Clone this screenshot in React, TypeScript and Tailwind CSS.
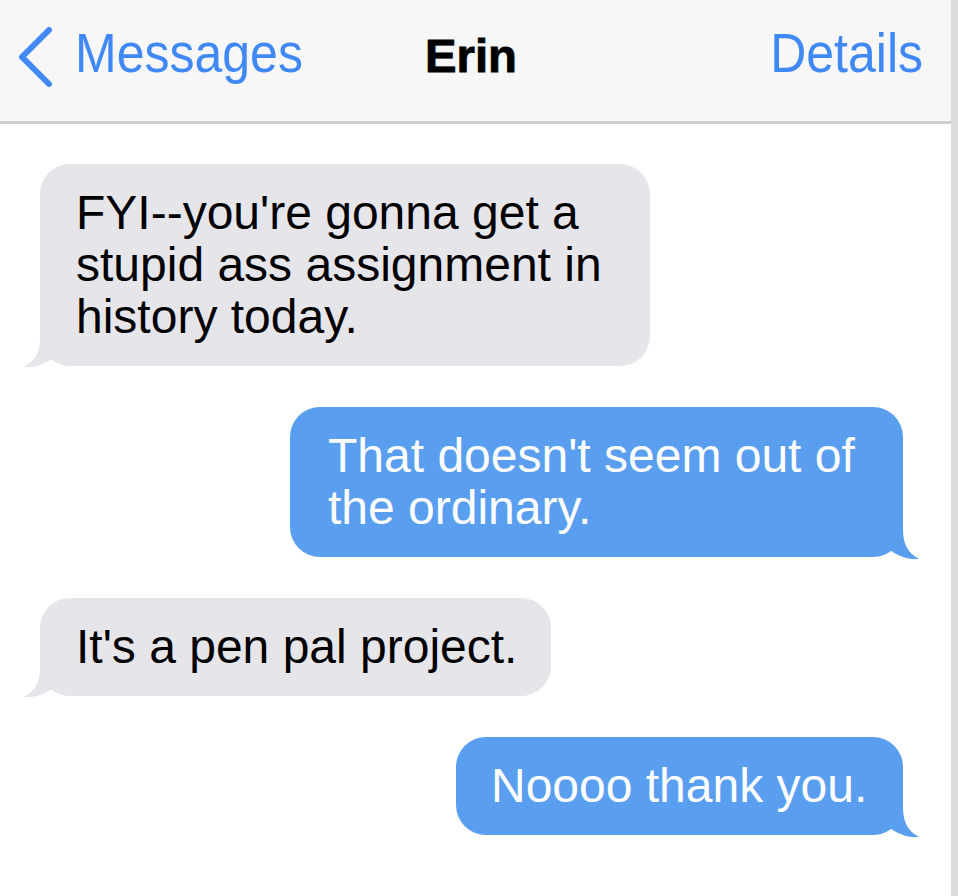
import React from "react";

type Msg = { text: string; mine: boolean; width: string; pad: string };

const messages: Msg[] = [
  { text: "FYI--you're gonna get a stupid ass assignment in history today.", mine: false, width: "w-[610px]", pad: "pl-[36px]" },
  { text: "That doesn't seem out of the ordinary.", mine: true, width: "w-[613px]", pad: "pl-[38px]" },
  { text: "It's a pen pal project.", mine: false, width: "w-[511px]", pad: "pl-[36px]" },
  { text: "Noooo thank you.", mine: true, width: "w-[447px]", pad: "pl-[35px]" },
];

// iOS 7 style bubble tail, drawn for the right side and mirrored for received messages
function Tail({ mine }: { mine: boolean }) {
  return (
    <svg
      width="80"
      height="44"
      viewBox="0 0 80 44"
      className={
        mine
          ? "absolute right-[-16px] bottom-[-3px] fill-[#5a9ef0]"
          : "absolute left-[-16px] bottom-[-2px] -scale-x-100 fill-[#e5e5ea]"
      }
    >
      <path d="M0,0 H64 V14 C64,28 69,37 80,43 C69,44 59,40 51,34 C48,31 46,30 43,30 C33,30 27,41 10,41 H0 Z" />
    </svg>
  );
}

function Bubble({ msg }: { msg: Msg }) {
  return (
    <div
      className={`relative ${msg.width} ${msg.pad} pr-[20px] py-[23px] rounded-[30px] text-[48px] leading-[52px] ${
        msg.mine ? "self-end mr-[48px] bg-[#5a9ef0] text-white" : "self-start ml-[40px] bg-[#e5e5ea] text-black"
      }`}
    >
      <Tail mine={msg.mine} />
      <span className="relative">{msg.text}</span>
    </div>
  );
}

export default function App() {
  return (
    <div className="flex w-[958px] h-[896px] overflow-hidden bg-white font-['Liberation_Sans',Arial,sans-serif]">
      <div className="flex-1 flex flex-col">
        {/* Nav bar */}
        <div className="h-[124px] shrink-0 flex items-baseline pt-[30px] bg-[#f7f7f8] border-b-[3px] border-[#cdcdd1]">
          <svg width="38" height="62" viewBox="0 0 38 62" className="self-start -mt-[4px] ml-[16px]">
            <path d="M33 4 L6 31 L33 58" fill="none" stroke="#3f88f5" strokeWidth="6" strokeLinecap="round" strokeLinejoin="round" />
          </svg>
          <span className="ml-[21px] text-[50px] leading-none text-[#3f88f5] scale-y-[1.12] origin-[50%_85%]">Messages</span>
          <span className="ml-[122px] text-[43px] leading-none font-bold text-black scale-x-[1.1] scale-y-[1.08] origin-[0%_85%] [-webkit-text-stroke:0.8px_black]">Erin</span>
          <span className="flex-1" />
          <span className="mr-[28px] text-[50px] leading-none text-[#3f88f5] scale-y-[1.12] origin-[50%_85%]">Details</span>
        </div>

        {/* Thread */}
        <div className="flex flex-col gap-[41px] pt-[40px]">
          {messages.map((m, i) => (
            <Bubble key={i} msg={m} />
          ))}
        </div>
      </div>
      <div className="w-[7px] bg-[#dcdcdc]" />
    </div>
  );
}
